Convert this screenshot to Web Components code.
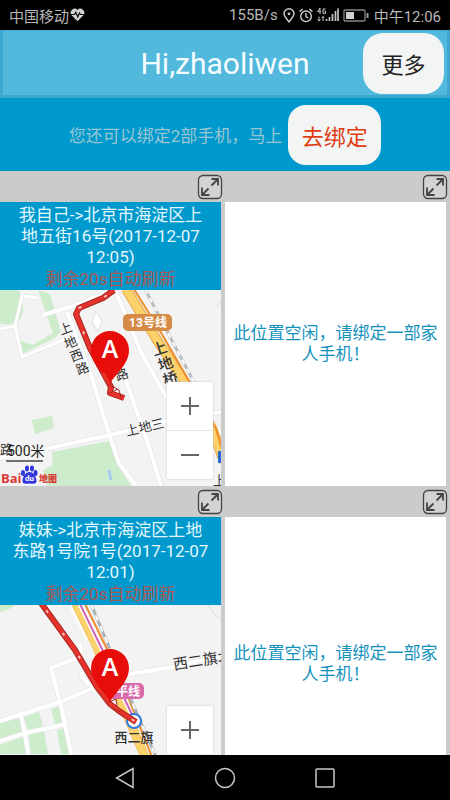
<!DOCTYPE html>
<html lang="zh-CN">
<head>
<meta charset="utf-8">
<meta name="viewport" content="width=device-width, initial-scale=1">
<title>Hi,zhaoliwen</title>
<style>
  html, body { margin: 0; height: 100%; }
  body { font-family: Roboto, "Noto Sans CJK SC", sans-serif; font-size: 17px; background: #000; }
</style>
</head>
<body>
<phone-screen>
  <status-bar slot="top"></status-bar>
  <title-bar slot="top">Hi,zhaoliwen</title-bar>
  <bind-banner slot="top">您还可以绑定2部手机，马上</bind-banner>
  <phone-tile>
    <located-phone>我自己-&gt;北京市海淀区上<br>地五街16号(2017-12-07<br>12:05)<map-view slot="map" place="shangdi"></map-view></located-phone>
  </phone-tile>
  <phone-tile><empty-phone>此位置空闲，请绑定一部家<br>人手机！</empty-phone></phone-tile>
  <phone-tile class="tall">
    <located-phone>妹妹-&gt;北京市海淀区上地<br>东路1号院1号(2017-12-07<br>12:01)<map-view slot="map" place="xierqi"></map-view></located-phone>
  </phone-tile>
  <phone-tile class="tall"><empty-phone>此位置空闲，请绑定一部家<br>人手机！</empty-phone></phone-tile>
  <nav-keys slot="bottom"></nav-keys>
</phone-screen>

<script>
const define = (name, html) => {
  const template = document.createElement('template');
  template.innerHTML = html;
  customElements.define(name, class extends HTMLElement {
    constructor() {
      super();
      this.attachShadow({ mode: 'open' }).append(template.content.cloneNode(true));
    }
  });
};

define('phone-screen', `
<style>
  :host { display: flex; flex-direction: column; height: 100vh; background: #000; }
  main { flex: 1; min-height: 0; overflow: hidden auto; scrollbar-width: none; background: #cbcbcb;
         display: grid; grid-template-columns: 1fr 1fr; align-content: start; }
  ::slotted(phone-tile) { height: 315px; }
  ::slotted(phone-tile.tall) { height: 324px; }
</style>
<slot name="top"></slot>
<main><slot></slot></main>
<slot name="bottom"></slot>`);

define('status-bar', `
<style>
  :host { display: flex; align-items: center; height: 30px; box-sizing: border-box; padding: 0 9px; font-size: 15px; color: #b8b8b8; }
  .heart { margin-left: 1px; margin-right: auto; }
  .icons { display: flex; align-items: center; gap: 4px; margin: 0 5px; }
  svg { display: block; }
</style>
<span>中国移动</span>
<svg class="heart" width="15" height="14" viewBox="0 0 15 14"><path d="M7.500 13.300 1.300 7A4 4 0 0 1 7.500 2 4 4 0 0 1 13.700 7Z" fill="#d2d2d2"/><path d="M1 6.500h3.500l1.300-2.200 2 4.700 1.700-4 1 1.500H14" fill="none" stroke="#111" stroke-width="1.200"/></svg>
<span>155B/s</span>
<span class="icons">
  <svg width="12" height="15" viewBox="0 0 12 15" fill="none" stroke="#ccc" stroke-width="1.500"><path d="M6 13.800C3 10.300 1 8 1 5.800a5 5 0 0 1 10 0C11 8 9 10.300 6 13.800Z"/><circle cx="6" cy="5.800" r="1.400" fill="#ccc" stroke="none"/></svg>
  <svg width="14" height="15" viewBox="0 0 14 15" fill="none" stroke="#ccc" stroke-width="1.400"><circle cx="7" cy="8.300" r="5.300"/><path d="M7 5v3.600l2.400 1.400M.6 3.600 3.600 1M13.400 3.600 10.400 1"/></svg>
  <svg width="22" height="16" viewBox="0 0 22 16" fill="none" stroke="#c4c4c4"><path d="M3 7V1L.6 4.600h3.600M8.600 2H6v4.400h2.500V4H7.300M2 14V9.500M.5 12.500 2 14l1.500-1.500M6 9.500V14M4.700 11 6 9.500 7.300 11" stroke-width="1"/><path d="M9.500 14v-2M12.500 14v-4M15.500 14V7M18.500 14V4M21 14V1.500" stroke-width="1.700"/></svg>
  <svg width="26" height="13" viewBox="0 0 26 13"><rect x="1" y="1" width="21" height="11" rx="1" fill="none" stroke="#858585" stroke-width="1.300"/><path d="M3 3h8v7H3z" fill="#d2d2d2"/><path d="M24.500 4v5" stroke="#999" stroke-width="2"/></svg>
</span>
<time>中午12:06</time>`);

define('title-bar', `
<style>
  :host { display: grid; grid-template-columns: 1fr auto 1fr; align-items: center; height: 68px; box-sizing: border-box;
          background: #52b9dd; border: 3px solid #3ca8cf; border-top-width: 1px; }
  h1 { grid-column: 2; margin: 0; font-size: 30px; font-weight: 400; color: #f4fcff; }
  button { justify-self: end; width: 81px; height: 61px; border: 0; border-radius: 20px; background: #f3f4f4;
           margin: 0 3px 0 0; padding: 0; font: inherit; font-size: 22px; color: #222; }
</style>
<h1><slot></slot></h1>
<button type="button">更多</button>`);

define('bind-banner', `
<style>
  :host { display: flex; align-items: center; justify-content: center; gap: 6px; height: 73px; background: #0099cd; color: #9bc5d2; }
  button { width: 93px; height: 60px; border: 0; border-radius: 18px; background: #f3f4f4; padding: 0; font: inherit; font-size: 22px; color: #e03c12; }
</style>
<span><slot></slot></span>
<button type="button">去绑定</button>`);

define('phone-tile', `
<style>
  :host { display: flex; flex-direction: column; min-width: 0; }
  header { display: flex; justify-content: flex-end; align-items: center; height: 31px; padding-right: 2px; }
  button { width: 26px; height: 26px; padding: 0; border: 0; background: none; }
  svg { display: block; }
  section { flex: 1; min-height: 0; margin-right: 4px; display: flex; flex-direction: column; }
  ::slotted(*) { flex: 1; min-height: 0; }
</style>
<header><button type="button" aria-label="放大"><svg width="26" height="26" viewBox="0 0 26 26" fill="none" stroke="#444"><rect x="1.500" y="1.500" width="23" height="23" rx="4.500" stroke-width="1.300" fill="#d3d3d3"/><path d="M14.500 11.500 21 5M14.500 5h6.500v6.500M11.500 14.500 5 21M5 13.500V21h7.500" stroke-width="1.800"/></svg></button></header>
<section><slot></slot></section>`);

define('empty-phone', `
<style>
  :host { display: flex; align-items: center; justify-content: center; background: #fff; color: #1592bc; text-align: center; line-height: 21px; }
</style>
<span><slot></slot></span>`);

define('located-phone', `
<style>
  :host { display: flex; flex-direction: column; }
  .info { background: #0099cd; color: #e2f7fd; text-align: center; line-height: 21px; padding: 3px 0 0; }
  p { margin: 0; }
  .left { color: #a95750; margin-top: 1px; }
  ::slotted(map-view) { flex: 1; min-height: 0; }
</style>
<div class="info"><p><slot></slot></p><p class="left">剩余20s自动刷新</p></div>
<slot name="map"></slot>`);

const pin = (x, y) => `<g transform="translate(${x} ${y})"><path d="M0 34C-4 25-19 15-19 0a19 19 0 0 1 38 0C19 15 4 25 0 34Z" fill="#e60d0a"/><text y="8" text-anchor="middle" font-family="Open Sans" font-size="25" font-weight="600" fill="#fff">A</text></g>`;
const track = (d) => `<path d="${d}" stroke="#a8241e" stroke-width="6"/><path d="${d}" stroke="#e5332c" stroke-width="4"/><path d="${d}" stroke="#f8c4c0" stroke-width="2" stroke-dasharray="3 25" stroke-dashoffset="-9"/>`;

const places = {
  shangdi: { height: 196, art: `
    <g fill="#cceccb">
      <path d="M0 0h18c6 10 7 22 2 29C15 35 6 36 0 33Z"/>
      <path d="M38 0 50 4 61 42 53 49 22 64 18 50 33 55 53 43Z"/>
      <path d="M32 130 52 126 54 138 35 144Z"/>
      <path d="M52 162 110 151 116 172 131 196H47L43 180 53 175Z"/>
    </g>
    <g fill="none">
      <g stroke="#e0e0e0" stroke-width="4"><path d="M23 2 15 36 0 39M24 6 38 8M15 36 22 67 78 44"/></g>
      <g stroke="#fff" stroke-width="3"><path d="M23 2 15 36 0 39M24 6 38 8M15 36 22 67 78 44"/></g>
      <g stroke="#e0e0e0" stroke-width="5"><path d="M43 25 73 16 112 0M67 22 91 85 110 147 119 173 136 196M0 168 50 158 110 145 167 131 221 122M115 0 141 62 168 110M122 80 147 150 161 196M196 118Q217 135 221 145"/></g>
      <g stroke="#fff" stroke-width="4"><path d="M43 25 73 16 112 0M67 22 91 85 110 147 119 173 136 196M0 168 50 158 110 145 167 131 221 122M115 0 141 62 168 110M122 80 147 150 161 196M196 118Q217 135 221 145"/></g>
      <path d="M96 21 102 31 98 42 92 32Z" fill="#fff" stroke="#ddd"/>
      <path d="M126-1 157 50 186 94 213 140 224 172" stroke="#e8aa45" stroke-width="10"/>
      <path d="M126-1 157 50 186 94 213 140 224 172" stroke="#fbd16c" stroke-width="8"/>
      <path d="M134-1 163 46 189 91 216 139 224 166" stroke="#ee8d2b" stroke-width="2"/>
      <path d="M145-1 177 60 197 98" stroke="#b8bec2" stroke-width="3"/>
      <path d="M145-1 177 60 197 98" stroke="#fff" stroke-width="2" stroke-dasharray="5 5"/>
      <path d="M217 17 221 10" stroke="#d9e4ea"/>
      <path d="M109 180l2 10" stroke="#a8cdec" stroke-width="3"/>
      <path d="M218 161h6v12h-6z" fill="#2867d8"/>
      <g stroke-linejoin="round">${track('M114 0 103 8 79 18 76 24 90 58 111 97 110 103 124 108')}</g>
    </g>
    <rect x="123" y="24" width="49" height="17" rx="5" fill="#d58a46"/>
    <text x="148" y="37" font-size="12" font-weight="700" text-anchor="middle" fill="#fff">13号线</text>
    <g class="label">
      <text x="61 66 72 78" y="45 59 72 85" rotate="-20">上地西路</text>
      <text x="154 160 165" y="66 81 96" rotate="-18" font-size="15" font-weight="500">上地桥</text>
      <text x="117" y="91" rotate="-18">路</text>
      <text transform="translate(127 146) rotate(-13)">上地三</text>
      <text x="213" y="195">上</text>
      <text x="0" y="164">路</text>
    </g>
    ${pin(110, 60)}
    <g fill="none"><path d="M103 83 111 97 110 103 124 108" stroke="#e5332c" stroke-width="3"/><path d="M108 94 119 100 121 108M110 103 118 99" stroke="#a52820"/></g>
    <text x="7" y="166" font-size="14" fill="#222">500米</text>
    <path d="M6 171h37" stroke="#444" stroke-width="1.500"/>
    <text x="1" y="193" font-family="Open Sans" font-size="13" font-weight="700" fill="#df3a36">Bai</text>
    <g fill="#3034da"><ellipse cx="23" cy="183" rx="2" ry="3"/><ellipse cx="27" cy="178.500" rx="2" ry="3"/><ellipse cx="32" cy="178.500" rx="2" ry="3"/><ellipse cx="35.500" cy="183" rx="2" ry="3"/><path d="M29.500 182c4 0 7 5 7 9 0 3-3 3-7 2.500-4 .5-7 .5-7-2.500 0-4 3-9 7-9Z"/></g>
    <text x="29.500" y="191" font-size="8" font-weight="700" text-anchor="middle" fill="#fff">du</text>
    <text x="39" y="192" font-size="9" font-weight="900" fill="#d63c36">地图</text>` },
  xierqi: { height: 205, art: `
    <g fill="#cceccb">
      <path d="M0 0h16Q9 5 0 7Z"/>
      <path d="M0 118 20 113 24 126 0 134ZM24 112 39 107 43 121 28 125ZM51 104 59 101 63 117 55 119ZM0 140 25 131 27 149H0ZM29 130 44 126 48 149H31ZM57 125 64 123 70 149H61Z"/>
    </g>
    <g fill="none">
      <path d="M208-1Q212 10 222 14" stroke="#ccdcea"/>
      <g stroke="#e2e2e2" stroke-width="5"><path d="M0 116 60 97 105 78M80 52 51 63 61 101 72 152M80 38 82 72 95 85M130 69 173 62 224 50M21 110 29 152M0 136 25 128 63 120"/></g>
      <g stroke="#fff" stroke-width="4"><path d="M0 116 60 97 105 78M80 52 51 63 61 101 72 152M80 38 82 72 95 85M130 69 173 62 224 50M21 110 29 152M0 136 25 128 63 120M71 0 88 34"/></g>
      <path d="M76-1 95 38 127 110 145 152 156 182" stroke="#e9b754" stroke-width="9"/>
      <path d="M76-1 95 38 127 110 145 152 156 182" stroke="#fbd16c" stroke-width="8"/>
      <path d="M80-1 101 42 117 78 136 118" stroke="#fff" stroke-width="5"/>
      <path d="M80-1 101 42 117 78 136 118" stroke="#cf64b5" stroke-width="2"/>
      <path d="M85-1 106 42 124 82 152 152" stroke="#ee8d2b" stroke-width="2"/>
      <path d="M91-1 109 42 128 88 156 152" stroke="#aab2b8" stroke-width="3"/>
      <path d="M91-1 109 42 128 88 156 152" stroke="#fff" stroke-width="2" stroke-dasharray="6 6"/>
      <rect x="108" y="78" width="36" height="16" rx="5" fill="#d869ab"/>
      <circle cx="134" cy="116" r="7" fill="#fff" stroke="#2f7be0" stroke-width="2"/>
    </g>
    <text x="116" y="91" font-size="12" font-weight="700" fill="#fff">平线</text>
    <g fill="none" stroke-linejoin="round">${track('M41-2 75 45 97 82 110 99 119 106 136 117')}</g>
    <g class="label">
      <text x="134" y="137" text-anchor="middle" font-weight="500">西二旗</text>
      <text transform="translate(174 65) rotate(-9)" font-size="15">西二旗北</text>
    </g>
    ${pin(110, 63)}
    <g fill="none"><path d="M92 74 97 82 110 99 119 106" stroke="#e5332c" stroke-width="3"/><path d="M107 98 116 94 117 101M112 103 120 107" stroke="#a52820"/></g>` }
};

customElements.define('map-view', class extends HTMLElement {
  constructor() {
    super();
    this.attachShadow({ mode: 'open' });
  }
  connectedCallback() {
    const { height, art } = places[this.getAttribute('place')];
    this.shadowRoot.innerHTML = `
<style>
  :host { display: block; position: relative; overflow: hidden; background: #f3f3f3; }
  svg { display: block; width: 100%; height: 100%; }
  .label { font-size: 13px; fill: #333; }
  .zoom { position: absolute; right: 8px; bottom: 7px; width: 46px; display: flex; flex-direction: column; background: #fff; border-radius: 2px; box-shadow: 0 0 2px #bbb; }
  button { height: 48px; padding: 0; border: 0; background: none; display: grid; place-items: center; }
  button + button { height: 49px; border-top: 1px solid #e6e6e6; }
  button svg { width: 18px; height: 18px; stroke: #666; stroke-width: 2; }
</style>
<svg viewBox="0 0 221 ${height}" preserveAspectRatio="xMinYMin slice" role="img" aria-label="地图">${art}</svg>
<div class="zoom">
  <button type="button" aria-label="放大地图"><svg viewBox="0 0 18 18"><path d="M0 9h18M9 0v18"/></svg></button>
  <button type="button" aria-label="缩小地图"><svg viewBox="0 0 18 18"><path d="M0 9h18"/></svg></button>
</div>`;
  }
});

define('nav-keys', `
<style>
  :host { display: flex; justify-content: center; align-items: center; gap: 76px; height: 45px; background: #000; }
  button { width: 24px; height: 24px; padding: 0; border: 0; background: none; }
  svg { display: block; fill: none; stroke: #c8c8c8; stroke-width: 1.500; }
</style>
<button type="button" aria-label="返回"><svg width="24" height="24" viewBox="0 0 24 24"><path d="M20 2.500v19L3.500 12Z"/></svg></button>
<button type="button" aria-label="主屏幕"><svg width="24" height="24" viewBox="0 0 24 24"><circle cx="12" cy="12" r="9.500"/></svg></button>
<button type="button" aria-label="最近任务"><svg width="24" height="24" viewBox="0 0 24 24"><rect x="3" y="3" width="18" height="18" rx="1"/></svg></button>`);
</script>
</body>
</html>
